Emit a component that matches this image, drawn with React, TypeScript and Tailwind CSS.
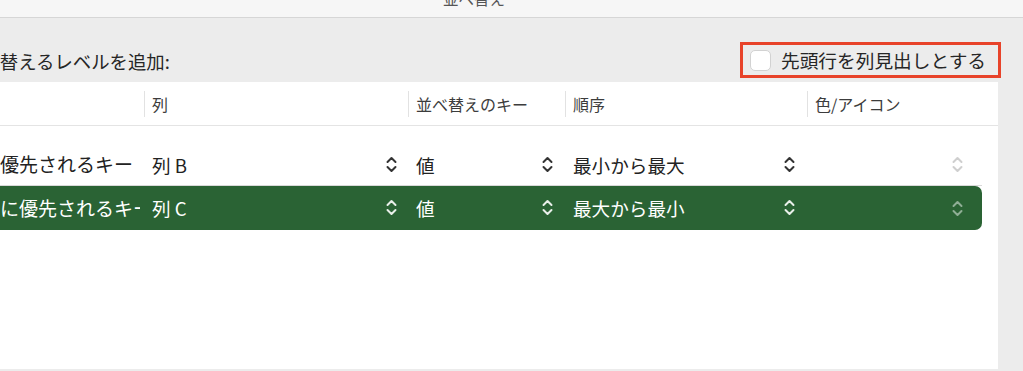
import React from 'react';

const Chevron: React.FC<{ className?: string }> = ({ className = '' }) => (
  <svg width="11" height="17" viewBox="0 0 11 17" fill="none" className={className}>
    <path d="M1.5 6 L5.5 2 L9.5 6" stroke="currentColor" strokeWidth="2" strokeLinecap="round" strokeLinejoin="round" />
    <path d="M1.5 11 L5.5 15 L9.5 11" stroke="currentColor" strokeWidth="2" strokeLinecap="round" strokeLinejoin="round" />
  </svg>
);

const ROWS = [
  { label: '最優先されるキー', column: '列 B', key: '値', order: '最小から最大', selected: false },
  { label: '次に優先されるキー', column: '列 C', key: '値', order: '最大から最小', selected: true },
];

const HEADERS = ['列', '並べ替えのキー', '順序', '色/アイコン'];

const App: React.FC = () => {
  return (
    <div
      className="w-[1023px] h-[371px] overflow-hidden bg-[#ececec] flex flex-col"
      style={{ fontFamily: '"Noto Sans CJK JP", "Noto Sans", sans-serif' }}
    >
      {/* title bar */}
      <div className="h-[18px] shrink-0 bg-[#f6f6f6] border-b border-[#d6d6d6] relative overflow-hidden">
        <span className="absolute left-[443px] top-[-12px] text-[15.5px] leading-[20px] text-[#555]">並べ替え</span>
      </div>

      {/* toolbar line */}
      <div className="h-[64px] shrink-0 flex items-end pb-[4px]">
        <div className="w-[740px] overflow-hidden pb-[4px]">
          <span className="block ml-[-37px] text-[18.4px] leading-[26px] text-[#262626] whitespace-nowrap">並べ替えるレベルを追加:</span>
        </div>
        <div className="w-[261px] h-[36px] border-[3px] border-[#e8432a] flex items-center pl-[7px] gap-[10px]">
          <div className="w-[21px] h-[21px] rounded-[5px] bg-white border border-[#d2d2d2]" />
          <span className="text-[18.7px] leading-[26px] text-[#262626] whitespace-nowrap">先頭行を列見出しとする</span>
        </div>
      </div>

      {/* table */}
      <div className="flex-1 flex">
        <div className="w-[998px] h-[287px] bg-white flex flex-col">
          <div className="h-[44px] shrink-0 border-b border-[#e4e4e4] grid grid-cols-[144px_264px_157px_242px_1fr] items-center">
            <div />
            {HEADERS.map((h) => (
              <div key={h} className="h-[26px] border-l border-[#e2e2e2] pl-[7px] flex items-center text-[16px] text-[#3c3c3c]">
                {h}
              </div>
            ))}
          </div>

          <div className="h-[18px]" />

          {ROWS.map((r) => (
            <div
              key={r.label}
              className={`w-[982px] grid grid-cols-[144px_264px_157px_242px_1fr] items-center text-[18.6px] ${
                r.selected
                  ? 'h-[44px] bg-[#2a6334] text-white rounded-r-[7px]'
                  : 'h-[42px] text-[#222] border-b border-[#d9d9d9]'
              }`}
            >
              <div className="w-[140px] overflow-hidden">
                <span className="block ml-[-19px] text-[19px] whitespace-nowrap">{r.label}</span>
              </div>
              <div className="flex items-center justify-between pl-[8px] pr-[11px]">
                <span>{r.column}</span>
                <Chevron className={r.selected ? 'text-[#e8efe9]' : 'text-[#333]'} />
              </div>
              <div className="flex items-center justify-between pl-[8px] pr-[12px]">
                <span>{r.key}</span>
                <Chevron className={r.selected ? 'text-[#e8efe9]' : 'text-[#333]'} />
              </div>
              <div className="flex items-center justify-between pl-[8px] pr-[12px]">
                <span>{r.order}</span>
                <Chevron className={r.selected ? 'text-[#e8efe9]' : 'text-[#333]'} />
              </div>
              <div className="flex items-center justify-end pr-[19px]">
                <Chevron className={r.selected ? 'text-[#8fae95]' : 'text-[#cfcfcf]'} />
              </div>
            </div>
          ))}
        </div>
      </div>
    </div>
  );
};

export default App;
